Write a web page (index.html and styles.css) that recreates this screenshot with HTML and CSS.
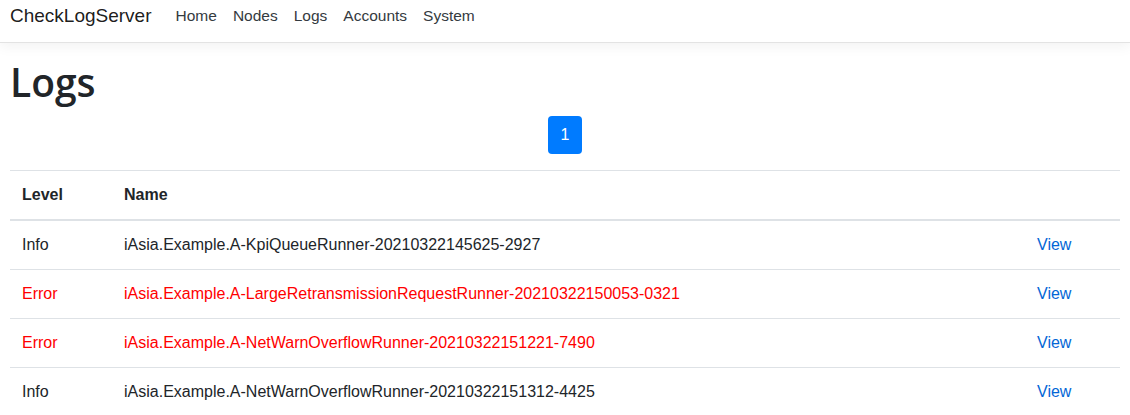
FILE: index.html
```html
<!DOCTYPE html>
<html lang="en">
<head>
<meta charset="utf-8">
<title>Logs - CheckLogServer</title>
<link rel="stylesheet" href="styles.css">
</head>
<body>
<header class="navbar">
  <a class="brand" href="#">CheckLogServer</a>
  <nav class="nav">
    <a class="nav-link" href="#">Home</a>
    <a class="nav-link" href="#">Nodes</a>
    <a class="nav-link" href="#">Logs</a>
    <a class="nav-link" href="#">Accounts</a>
    <a class="nav-link" href="#">System</a>
  </nav>
</header>
<main class="container">
  <h1 class="title">Logs</h1>
  <div class="pagination">
    <a class="page active" href="#">1</a>
  </div>
  <table class="table">
    <thead>
      <tr><th class="col-level">Level</th><th>Name</th><th class="col-action"></th></tr>
    </thead>
    <tbody>
      <tr><td>Info</td><td>iAsia.Example.A-KpiQueueRunner-20210322145625-2927</td><td><a class="link" href="#">View</a></td></tr>
      <tr class="error"><td>Error</td><td>iAsia.Example.A-LargeRetransmissionRequestRunner-20210322150053-0321</td><td><a class="link" href="#">View</a></td></tr>
      <tr class="error"><td>Error</td><td>iAsia.Example.A-NetWarnOverflowRunner-20210322151221-7490</td><td><a class="link" href="#">View</a></td></tr>
      <tr><td>Info</td><td>iAsia.Example.A-NetWarnOverflowRunner-20210322151312-4425</td><td><a class="link" href="#">View</a></td></tr>
    </tbody>
  </table>
</main>
</body>
</html>
```
FILE: styles.css
```css
html, body {
  margin: 0;
  padding: 0;
  background: #fff;
}
body {
  font-family: "Liberation Sans", Arial, sans-serif;
  font-size: 16px;
  line-height: 1.5;
  color: #212529;
}
a { text-decoration: none; }

.navbar {
  display: flex;
  align-items: flex-start;
  height: 42px;
  padding: 0 10px;
  border-bottom: 1px solid #e3e3e3;
  box-shadow: 0 4px 12px rgba(0, 0, 0, 0.05);
}
.brand {
  font-size: 19px;
  line-height: 32px;
  color: rgba(0, 0, 0, 0.9);
  margin-right: 16px;
}
.nav {
  display: flex;
}
.nav-link {
  font-size: 15.5px;
  line-height: 32px;
  padding: 0 8px;
  color: #343a40;
}

.container {
  padding: 0 10px;
}
.title {
  margin: 16px 0 10px;
  font-family: "Open Sans", "Liberation Sans", sans-serif;
  font-size: 39px;
  font-weight: 600;
  line-height: 1.2;
}
.pagination {
  display: flex;
  justify-content: center;
  margin-bottom: 16px;
}
.page {
  display: block;
  width: 34px;
  height: 38px;
  line-height: 38px;
  text-align: center;
  border-radius: 4px;
  background: #007bff;
  color: #fff;
  font-size: 16px;
}

.table {
  width: 100%;
  border-collapse: collapse;
}
.table th, .table td {
  padding: 12px;
  text-align: left;
  vertical-align: top;
  border-top: 1px solid #dee2e6;
}
.table thead th {
  font-weight: 700;
  border-bottom: 2px solid #dee2e6;
}
.col-level { width: 78px; }
.col-action { width: 71px; }
.error td { color: #ff0000; }
.link { color: #0366d6; }
```
